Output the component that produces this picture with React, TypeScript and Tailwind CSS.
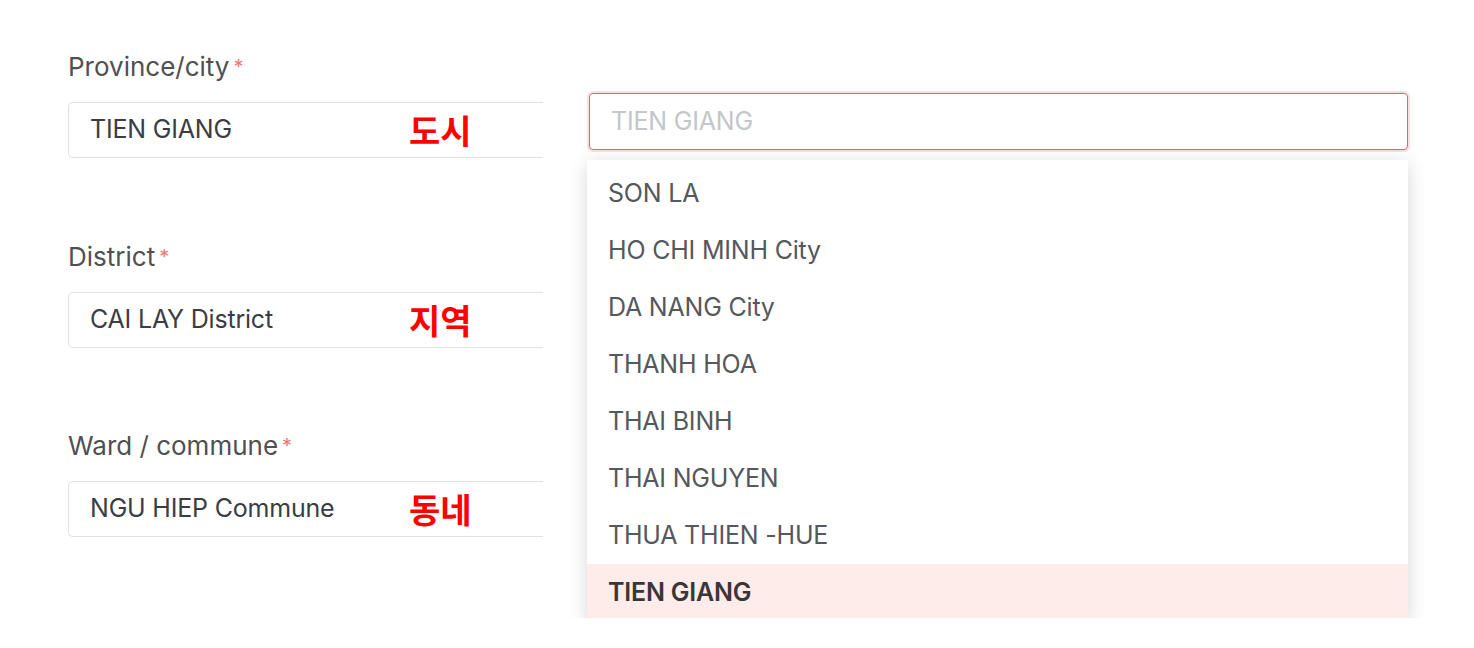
import React from "react";

const items = [
  "SON LA",
  "HO CHI MINH City",
  "DA NANG City",
  "THANH HOA",
  "THAI BINH",
  "THAI NGUYEN",
  "THUA THIEN -HUE",
  "TIEN GIANG",
];

function Field({ label, value, note, top }: { label: string; value: string; note: string; top: string }) {
  return (
    <div className={top}>
      <div className="h-[32px] leading-[32px] text-[26px] text-[#505050] tracking-[0px]">
        {label}
        <span className="ml-[4px] text-[#e57c7c] text-[20px] align-top">*</span>
      </div>
      <div className="mt-[19px] h-[56px] w-[475px] border border-r-0 border-[#e2e2e2] rounded-l-[5px] flex items-center pl-[21px]">
        <span className="w-[319px] text-[25px] text-[#3a3d44] tracking-[-0.2px]">{value}</span>
        <span className="text-[34px] font-bold text-[#ff0000] leading-none font-['Noto_Sans_CJK_KR',sans-serif]">{note}</span>
      </div>
    </div>
  );
}

export default function App() {
  return (
    <div className="w-[1474px] h-[648px] bg-white overflow-hidden font-['Inter',sans-serif]">
      <div className="h-[618px] overflow-hidden flex">
        <div className="pl-[68px] w-[543px] shrink-0">
          <Field label="Province/city" value="TIEN GIANG" note="도시" top="mt-[51px]" />
          <Field label="District" value="CAI LAY District" note="지역" top="mt-[83px]" />
          <Field label="Ward / commune" value="NGU HIEP Commune" note="동네" top="mt-[82px]" />
        </div>
        <div className="ml-[46px] w-[819px] shrink-0">
          <div className="mt-[93px] h-[57px] border border-[#cf6d76] rounded-[4px] shadow-[0_0_0_2px_rgba(230,110,120,0.22)] flex items-center pl-[21px]">
            <span className="text-[25px] text-[#c3c6ca] tracking-[-0.2px]">TIEN GIANG</span>
          </div>
          <div className="mt-[10px] ml-[-2px] bg-white shadow-[0_4px_18px_rgba(0,0,0,0.16)] pt-[5px]">
            {items.map((it, i) => {
              const active = i === items.length - 1;
              return (
                <div
                  key={it}
                  className={
                    active
                      ? "h-[57px] flex items-center pl-[21px] bg-[#fdecea] text-[25px] font-semibold text-[#3a3538] tracking-[-0.2px]"
                      : "h-[57px] flex items-center pl-[21px] text-[25px] text-[#55585c] tracking-[-0.2px]"
                  }
                >
                  {it}
                </div>
              );
            })}
          </div>
        </div>
      </div>
    </div>
  );
}
